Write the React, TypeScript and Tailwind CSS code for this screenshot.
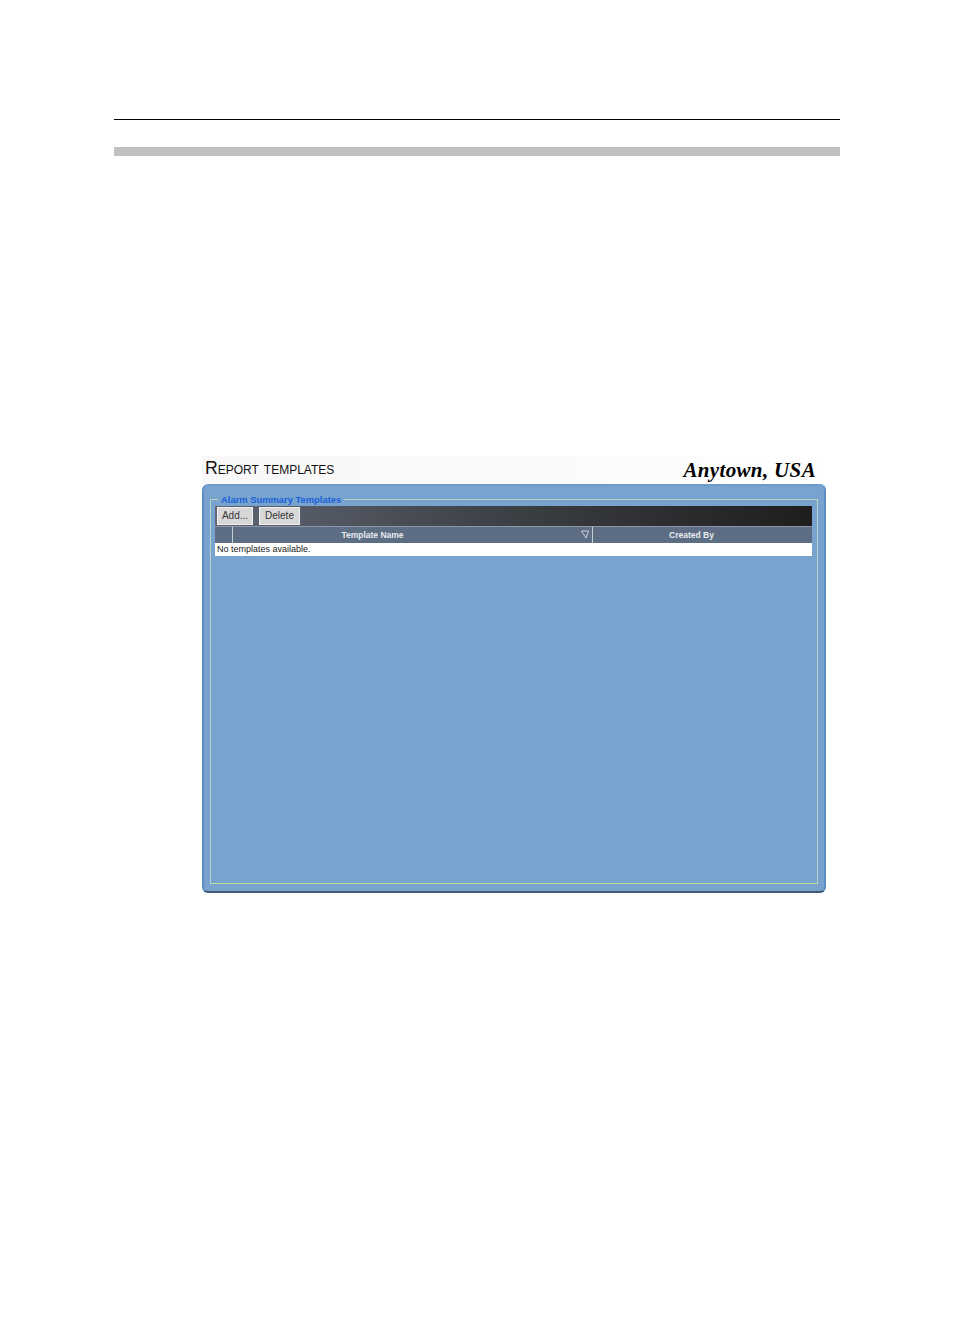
export default function App() {
  return (
    <div className="w-[954px] h-[1321px] bg-white font-['Liberation_Sans',sans-serif] pt-[119px] pl-[114px]">
      <div className="w-[726px] h-px bg-black" />
      <div className="w-[726px] h-[9px] mt-[27px] bg-[#c0c0c0]" />

      <div className="w-[624px] mt-[300px] ml-[88px]">
        <div className="h-[28px] flex items-center justify-between pl-[3px] pr-[10px] bg-gradient-to-r from-[#f8f8f8] via-[#fbfafa] to-white">
          <div className="pb-[4px] text-[#111] [font-variant:small-caps]">
            <span className="text-[17.7px] leading-[24px]">Report templates</span>
          </div>
          <div className="font-['Liberation_Serif',serif] font-bold italic text-[21px] leading-[26px] tracking-[0.35px] text-black">
            Anytown, USA
          </div>
        </div>

        <div className="h-[409px] rounded-[6px] bg-[#78a3cf] border-2 border-x-[#5b8fc0] border-t-[#6a9bcb] border-b-[#3f5a78] px-[6px] pt-[7px]">
          <fieldset className="h-[391px] border border-[#b9d3c4] border-b-[#bcdc9c] pl-1 pr-[5px] pb-0 m-0 min-w-0">
            <legend className="ml-[3px] px-[3px] text-[9.4px] leading-[13px] font-bold text-[#1a5fd8]">
              Alarm Summary Templates
            </legend>
            <div className="h-[20px] flex items-center gap-[6px] pl-[2px] bg-gradient-to-r from-[#5f6674] via-[#3c3f44] to-[#1e1e1e]">
              <button className="w-[36px] h-[18px] bg-[#d8d8d8] border border-[#efefef] text-[10px] leading-none text-[#333]">
                Add...
              </button>
              <button className="w-[41px] h-[18px] bg-[#d8d8d8] border border-[#efefef] text-[10px] leading-none text-[#333]">
                Delete
              </button>
            </div>
            <div className="h-[17px] flex border-t border-[#8d99a8] bg-[#5d6d84] text-[8.5px] leading-[16px] font-bold text-[#e8ecf0]">
              <div className="w-[18px] border-r border-[#c4ccd6]" />
              <div className="w-[360px] border-r border-[#c4ccd6] relative text-center pr-[80px]">
                Template Name
                <svg className="absolute right-[3px] top-[3px] w-[8px] h-[9px]" viewBox="0 0 8 9" fill="none" stroke="#e8ecf0" strokeWidth="0.8">
                  <path d="M0.5 1 H7.5 L5 8 Z" />
                </svg>
              </div>
              <div className="flex-1 text-center pr-[22px]">Created By</div>
            </div>
            <div className="h-[13px] bg-white text-[9px] leading-[13px] text-[#222] pl-[2px]">
              No templates available.
            </div>
          </fieldset>
        </div>
      </div>
    </div>
  );
}
